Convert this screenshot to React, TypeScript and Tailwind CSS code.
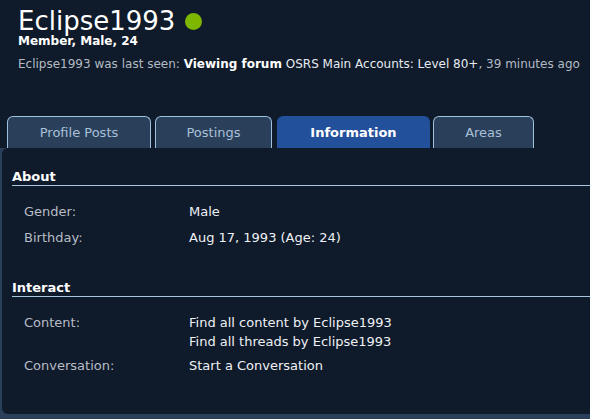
import React from 'react';

type Row = { label: string; values: string[] };

const ABOUT: Row[] = [
  { label: 'Gender:', values: ['Male'] },
  { label: 'Birthday:', values: ['Aug 17, 1993 (Age: 24)'] },
];

const INTERACT: Row[] = [
  { label: 'Content:', values: ['Find all content by Eclipse1993', 'Find all threads by Eclipse1993'] },
  { label: 'Conversation:', values: ['Start a Conversation'] },
];

// widths + left margins measured off the forum's tab strip
const TABS = [
  { name: 'Profile Posts', cls: 'ml-[7px] w-[144px]' },
  { name: 'Postings', cls: 'ml-[4px] w-[117px]' },
  { name: 'Information', cls: 'ml-[5px] w-[153px]', active: true },
  { name: 'Areas', cls: 'ml-[3px] w-[101px]' },
];

const SectionHeading = ({ title }: { title: string }) => (
  <h3 className="ml-[10px] border-b border-[#a9c6df] text-[13px] font-bold leading-[16px] text-white">
    {title}
  </h3>
);

const InfoRows = ({ rows, tight }: { rows: Row[]; tight?: boolean }) => (
  <dl className={tight ? 'pt-[13px]' : 'pt-[13px]'}>
    {rows.map((row) => (
      <div
        key={row.label}
        className={`flex text-[13px] ${tight ? 'py-[2.5px] leading-[19px]' : 'py-[3px] leading-[20px]'}`}
      >
        <dt className="w-[187px] shrink-0 pl-[22px] text-[#b7bdc6]">{row.label}</dt>
        <dd className="text-[#eef1f5]">
          {row.values.map((v) => (
            <div key={v}>{v}</div>
          ))}
        </dd>
      </div>
    ))}
  </dl>
);

export default function App() {
  return (
    <div
      className="h-[419px] w-[590px] overflow-hidden bg-[#0f1a2a]"
      style={{ fontFamily: '"DejaVu Sans", Verdana, sans-serif' }}
    >
      <header className="px-[18px] pt-[7px]">
        <div className="flex items-center gap-[10px]">
          <h1 className="text-[26px] leading-[28px] text-white">Eclipse1993</h1>
          <span className="h-[17px] w-[17px] rounded-full bg-[#7db700]" />
        </div>
        <div className="text-[12px] font-bold leading-[13px] text-white">Member, Male, 24</div>
        <div className="mt-[9px] whitespace-nowrap text-[12px] leading-[15px] text-[#b3bac4]">
          Eclipse1993 was last seen: <span className="font-bold text-white">Viewing forum</span>{' '}
          <span className="text-[#e6ebf1]">OSRS Main Accounts: Level 80+</span>, 39 minutes ago
        </div>
      </header>

      <nav className="mt-[44px] flex">
        {TABS.map((tab) => (
          <div
            key={tab.name}
            className={`${tab.cls} rounded-t-[6px] border border-b-0 text-center text-[13px] leading-[31px] ${
              tab.active
                ? 'border-[#23509b] bg-[#23509b] font-bold text-white'
                : 'border-[#9dc1df] bg-[#2a3f59] text-[#a9c0da]'
            }`}
          >
            {tab.name}
          </div>
        ))}
      </nav>

      <section className="bg-[#2a3f5a] pb-[5px] pl-[2px]">
        <div className="h-[266px] rounded-l-[6px] bg-[#0f1a2a] pt-[21px]">
          <SectionHeading title="About" />
          <InfoRows rows={ABOUT} />
          <div className="mt-[29px]">
            <SectionHeading title="Interact" />
            <InfoRows rows={INTERACT} tight />
          </div>
        </div>
      </section>
    </div>
  );
}
